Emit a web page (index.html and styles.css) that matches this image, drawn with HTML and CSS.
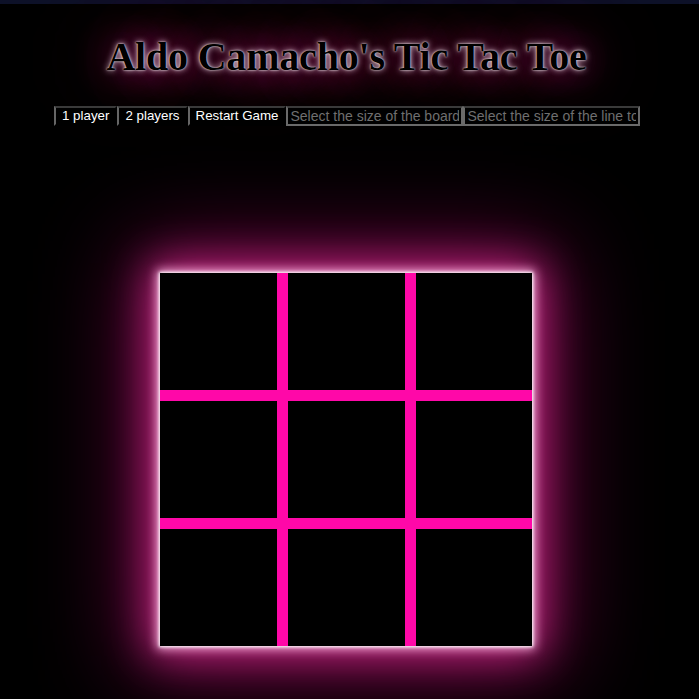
FILE: index.html
```html
<!DOCTYPE html>
<html>
<head>
<meta charset="utf-8">
<link rel="stylesheet" href="styles.css">
</head>
<body>
<div class="topbar"></div>
<h1 class="title">Aldo Camacho's Tic Tac Toe</h1>
<div class="controls">
  <button class="btn">1 player</button>
  <button class="btn">2 players</button>
  <button class="btn">Restart Game</button>
  <input class="field" type="text" placeholder="Select the size of the board">
  <input class="field" type="text" placeholder="Select the size of the line to win">
</div>
<div class="stage">
  <div class="board">
    <div class="cell"></div><div class="cell"></div><div class="cell"></div>
    <div class="cell"></div><div class="cell"></div><div class="cell"></div>
    <div class="cell"></div><div class="cell"></div><div class="cell"></div>
  </div>
</div>
</body>
</html>
```
FILE: styles.css
```css
html, body {
  margin: 0;
  padding: 0;
  background: #000;
  height: 100%;
  overflow: hidden;
}
body {
  font-family: "Liberation Serif", serif;
}
.topbar {
  height: 4px;
  background: #0d1128;
}
.title {
  margin: 32px 0 0 0;
  padding-right: 6px;
  text-align: center;
  font-family: "Liberation Serif", serif;
  font-weight: bold;
  font-size: 40px;
  line-height: 42px;
  letter-spacing: -0.2px;
  color: #000;
  text-shadow: 0 0 2px #fff, 0 0 6px #f4d8ea, 0 0 40px #ff1493, 0 0 80px #b0157a;
}
.controls {
  display: flex;
  padding-left: 54px;
  margin-top: 28px;
  height: 20px;
}
.btn {
  font-family: "Liberation Sans", Arial, sans-serif;
  font-size: 13.33px;
  color: #fff;
  background: #000;
  border: 2px solid;
  border-color: #3a3a3a #000 #000 #666;
  padding: 0 6px 2px 6px;
  margin: 0;
  height: 20px;
  line-height: 16px;
}
.field {
  font-family: "Liberation Sans", Arial, sans-serif;
  font-size: 14px;
  color: #ccc;
  background: #000;
  border: 2px solid #6a6a6a;
  border-top-color: #3a3a3a;
  padding: 0 2px;
  margin: 0;
  height: 20px;
  width: 177px;
  box-sizing: border-box;
}
.field::placeholder {
  color: #6f6f6f;
}
.stage {
  padding-left: 160px;
  margin-top: 147px;
}
.board {
  display: grid;
  grid-template-columns: 117px 117px 116px;
  grid-template-rows: 117px 117px 117px;
  gap: 11px;
  width: 372px;
  background: #ff08a8;
  box-shadow: 0 0 3px 1px #fff, 0 0 10px 3px #f7b0dc, 0 0 40px 10px #c0287f, 0 0 90px 24px #6a0040;
}
.cell {
  background: #000;
}
```
